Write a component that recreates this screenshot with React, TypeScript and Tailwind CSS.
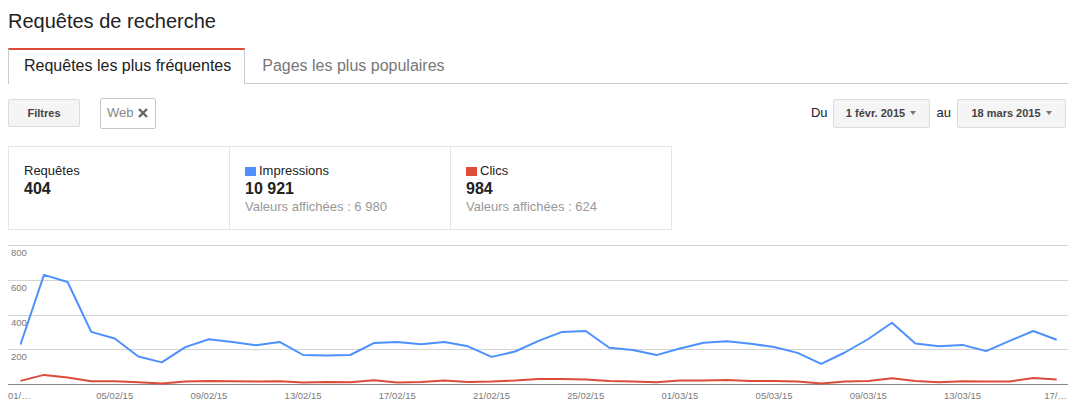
import React from "react";

const impressions = [
  230, 631, 590, 303, 265, 161, 127, 215, 261, 245, 226, 245, 170, 167, 170,
  238, 245, 232, 245, 220, 159, 190, 251, 303, 308, 211, 199, 169, 207, 240,
  249, 234, 216, 182, 119, 184, 262, 355, 236, 220, 228, 192, 251, 308, 257,
];

const clics = [
  21, 55, 40, 19, 19, 13, 6, 17, 21, 19, 17, 19, 12, 15, 13, 25, 12, 15, 23,
  15, 17, 23, 32, 32, 28, 21, 17, 13, 23, 23, 26, 21, 21, 17, 6, 17, 21, 36,
  21, 13, 19, 17, 17, 38, 29,
];

// chart coords are relative to the svg (left = page x 8, top = page y 240)
const X0 = 12.5;
const STEP = 23.55;
const BASE = 144.5;
const SCALE = 139 / 800;

const toPoints = (values: number[]) =>
  values
    .map((v, i) => `${(X0 + i * STEP).toFixed(1)},${(BASE - v * SCALE).toFixed(1)}`)
    .join(" ");

const xLabels = [
  { day: 4, text: "05/02/15" },
  { day: 8, text: "09/02/15" },
  { day: 12, text: "13/02/15" },
  { day: 16, text: "17/02/15" },
  { day: 20, text: "21/02/15" },
  { day: 24, text: "25/02/15" },
  { day: 28, text: "01/03/15" },
  { day: 32, text: "05/03/15" },
  { day: 36, text: "09/03/15" },
  { day: 40, text: "13/03/15" },
];

function Chart() {
  const grid = [5.5, 40.5, 75.5, 109.5];
  const yLabels = ["800", "600", "400", "200"];
  return (
    <svg width={1060} height={175} className="block">
      {grid.map((y) => (
        <line key={y} x1={0} x2={1060} y1={y} y2={y} stroke="#d4d4d4" strokeWidth={1} />
      ))}
      <line x1={0} x2={1060} y1={BASE} y2={BASE} stroke="#888" strokeWidth={1} />
      {yLabels.map((t, i) => (
        <text
          key={t}
          x={3}
          y={grid[i] + 10.5}
          fontSize={9.5}
          fill="#7a7a7a"
          fontFamily="'Liberation Sans', Arial, sans-serif"
        >
          {t}
        </text>
      ))}
      <polyline
        points={toPoints(impressions)}
        fill="none"
        stroke="#4d90fe"
        strokeWidth={2}
        strokeLinejoin="round"
      />
      <polyline
        points={toPoints(clics)}
        fill="none"
        stroke="#dd4b39"
        strokeWidth={2}
        strokeLinejoin="round"
      />
      <g fontSize={9.5} fill="#7a7a7a" fontFamily="'Liberation Sans', Arial, sans-serif">
        <text x={0} y={158.5}>01/…</text>
        {xLabels.map((l) => (
          <text key={l.text} x={X0 + l.day * STEP} y={158.5} textAnchor="middle">
            {l.text}
          </text>
        ))}
        <text x={1059} y={158.5} textAnchor="end">17/…</text>
      </g>
    </svg>
  );
}

function DateButton({ label, width }: { label: string; width: string }) {
  return (
    <button
      className={`${width} h-[29px] flex items-center justify-center gap-[5px] bg-[#f5f5f5] border border-[#dcdcdc] rounded-[2px] text-[11px] font-bold text-[#444]`}
    >
      <span>{label}</span>
      <span className="w-0 h-0 border-l-[3px] border-r-[3px] border-t-[4px] border-l-transparent border-r-transparent border-t-[#777]" />
    </button>
  );
}

function StatCell({
  label,
  value,
  sub,
  color,
  last,
}: {
  label: string;
  value: string;
  sub?: string;
  color?: string;
  last?: boolean;
}) {
  return (
    <div className={`flex-1 pl-[15px] pt-[16px] ${last ? "" : "border-r border-[#e5e5e5]"}`}>
      <div className="flex items-center text-[13px] leading-[16px] text-[#222]">
        {color && <span className={`inline-block w-[11px] h-[9px] mr-[3px] ${color}`} />}
        {label}
      </div>
      <div className="text-[16px] leading-[19px] font-bold text-[#222]">{value}</div>
      {sub && <div className="text-[13px] leading-[17px] text-[#999]">{sub}</div>}
    </div>
  );
}

export default function App() {
  return (
    <div
      className="w-[1080px] h-[415px] overflow-hidden bg-white pl-[8px] pr-[12px]"
      style={{ fontFamily: "'Liberation Sans', Arial, sans-serif" }}
    >
      <h1 className="pt-[9px] text-[20px] leading-[24px] text-[#222]">Requêtes de recherche</h1>

      {/* tabs */}
      <div className="mt-[15px] flex border-b border-[#ccc]">
        <div className="-mb-px bg-white border-t-2 border-t-[#dd4b39] border-x border-x-[#ccc] pl-[15px] pr-[13px] pt-[6px] pb-[8px] text-[16px] leading-[20px] text-[#222]">
          Requêtes les plus fréquentes
        </div>
        <div className="px-[17px] pt-[8px] pb-[7px] text-[16px] leading-[20px] text-[#777]">
          Pages les plus populaires
        </div>
      </div>

      {/* filters + dates */}
      <div className="mt-[13px] h-[32px] flex items-center justify-between">
        <div className="flex items-center">
          <button className="w-[72px] h-[28px] bg-[#f5f5f5] border border-[#dcdcdc] rounded-[2px] text-[11px] font-bold text-[#444]">
            Filtres
          </button>
          <div className="ml-[20px] h-[31px] flex items-center pl-[6px] pr-[7px] border border-[#c8c8c8] rounded-[2px] bg-white">
            <span className="text-[13px] text-[#888]">Web</span>
            <svg width="10" height="10" viewBox="0 0 10 10" className="ml-[4px]">
              <path d="M1 1 L9 9 M9 1 L1 9" stroke="#666" strokeWidth="2.4" />
            </svg>
          </div>
        </div>
        <div className="flex items-center mr-[2px] text-[13px] text-[#222]">
          <span className="mr-[5px]">Du</span>
          <DateButton label="1 févr. 2015" width="w-[97px]" />
          <span className="ml-[7px] mr-[6px]">au</span>
          <DateButton label="18 mars 2015" width="w-[109px]" />
        </div>
      </div>

      {/* stats */}
      <div className="mt-[17px] w-[664px] h-[84px] flex border border-[#e5e5e5]">
        <StatCell label="Requêtes" value="404" />
        <StatCell
          label="Impressions"
          value="10 921"
          sub="Valeurs affichées : 6 980"
          color="bg-[#4d90fe]"
        />
        <StatCell
          label="Clics"
          value="984"
          sub="Valeurs affichées : 624"
          color="bg-[#dd4b39]"
          last
        />
      </div>

      <div className="mt-[10px]">
        <Chart />
      </div>
    </div>
  );
}
